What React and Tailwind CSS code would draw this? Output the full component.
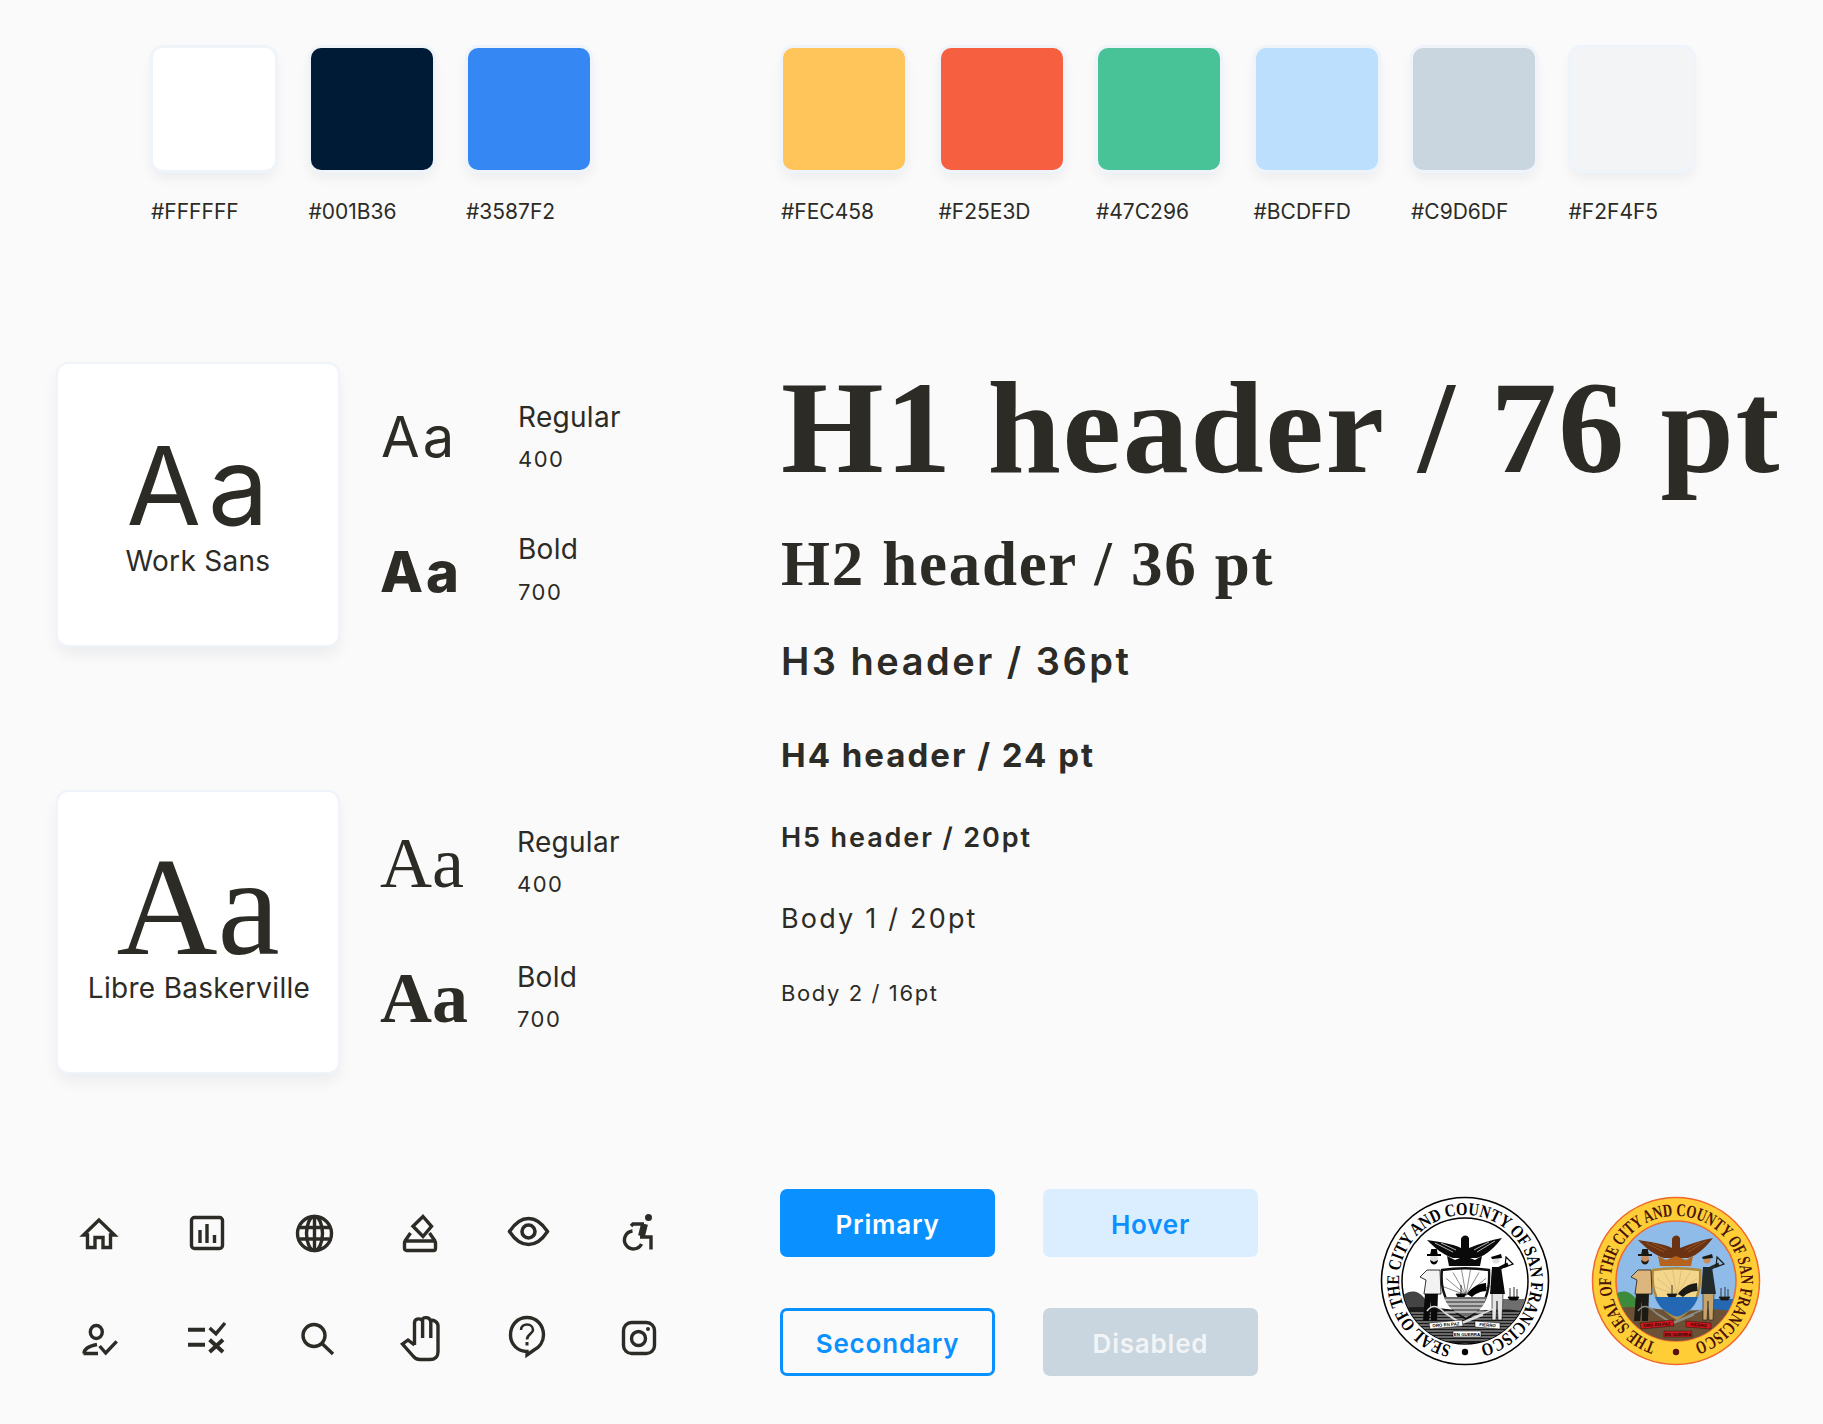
const sans = 'font-["Inter",sans-serif]';
const ink = '#2c2b26';

const swatchesLeft = [
  { color: '#FFFFFF', label: '#FFFFFF' },
  { color: '#001B36', label: '#001B36' },
  { color: '#3587F3', label: '#3587F2' },
];
const swatchesRight = [
  { color: '#FFC55B', label: '#FEC458' },
  { color: '#F66041', label: '#F25E3D' },
  { color: '#48C397', label: '#47C296' },
  { color: '#BCDFFD', label: '#BCDFFD' },
  { color: '#C9D6DF', label: '#C9D6DF' },
  { color: '#F2F4F5', label: '#F2F4F5' },
];

function Swatch({ color, label }) {
  return (
    <div className="flex w-[122px] flex-col">
      <div
        className="h-[122px] w-[122px] rounded-[10px] shadow-[0_0_0_3px_#eff4fa,0_7px_14px_rgba(0,27,54,0.07)]"
        style={{ backgroundColor: color }}
      />
      <div className={`${sans} -ml-[2px] mt-[28px] whitespace-nowrap text-[21px] leading-[28px] text-[#2c2b26]`}>{label}</div>
    </div>
  );
}

function Variant({ sample, aaClass, aaOffset, name, weight, gap, nameClass = '' }) {
  return (
    <div className="flex">
      <div className={`w-[135px] shrink-0 ${aaOffset} ${aaClass} text-[#2c2b26]`}>{sample}</div>
      <div className={`${sans} ${nameClass} text-[#2c2b26]`}>
        <div className="text-[28px] leading-[34px] tracking-[0.3px]">{name}</div>
        <div className={`${gap} text-[22px] leading-[28px] tracking-[1.5px]`}>{weight}</div>
      </div>
    </div>
  );
}

function WorkSansRow() {
  return (
    <div className="flex">
      <div className="h-[281px] w-[280px] shrink-0 rounded-[10px] bg-white pt-[68px] text-center text-[#2c2b26] shadow-[0_0_0_2px_#eff4fa,0_8px_16px_rgba(0,27,54,0.07)]">
        <div className={`${sans} ml-[6px] text-[108px] leading-[108px] tracking-[7px]`}>Aa</div>
        <div className={`${sans} mt-[4px] text-[28px] leading-[34px] tracking-[0.3px]`}>Work Sans</div>
      </div>
      <div className="ml-[45px] flex flex-col pt-[36px]">
        <Variant sample="Aa" aaClass={`${sans} text-[56px] leading-[60px] tracking-[3px]`} aaOffset="mt-[7px] -ml-[2px] mr-[2px]" name="Regular" weight="400" gap="mt-[11px]" />
        <div className="mt-[59px]">
          <Variant sample="Aa" aaClass={`${sans} text-[56px] leading-[60px] font-extrabold tracking-[3px]`} aaOffset="mt-[10px] -ml-[3px]" name="Bold" weight="700" gap="mt-[12px]" nameClass="ml-[3px]" />
        </div>
      </div>
    </div>
  );
}

function BaskervilleRow() {
  const serif = 'font-["Liberation_Serif",serif]';
  return (
    <div className="mt-[147px] flex">
      <div className="h-[280px] w-[280px] shrink-0 rounded-[10px] bg-white pt-[51px] text-center text-[#2c2b26] shadow-[0_0_0_2px_#eff4fa,0_8px_16px_rgba(0,27,54,0.07)]">
        <div className={`${serif} text-[140px] leading-[128px]`}>Aa</div>
        <div className={`${sans} ml-[2px] whitespace-nowrap text-[28px] leading-[34px] tracking-[0.3px]`}>Libre Baskerville</div>
      </div>
      <div className="ml-[42px] flex flex-col pt-[33px]">
        <Variant sample="Aa" aaClass={`${serif} text-[72px] leading-[72px]`} aaOffset="mt-[2px]" name="Regular" weight="400" gap="mt-[11px]" nameClass="ml-[2px]" />
        <div className="mt-[61px]">
          <Variant sample="Aa" aaClass={`${serif} text-[72px] leading-[72px] font-bold`} aaOffset="mt-[2px]" name="Bold" weight="700" gap="mt-[11px]" nameClass="ml-[2px]" />
        </div>
      </div>
    </div>
  );
}

function Headings() {
  const serif = 'font-["Liberation_Serif",serif] font-bold whitespace-nowrap';
  const work = `${sans} whitespace-nowrap`;
  return (
    <div className="flex flex-col text-[#2c2b26]">
      <div className={`${serif} mt-[4px] text-[132px] leading-[120px] tracking-[1.6px]`}>H1 header / 76 pt</div>
      <div className={`${serif} mt-[41px] text-[63px] leading-[70px] tracking-[1.7px]`}>H2 header / 36 pt</div>
      <div className={`${work} mt-[40px] text-[38px] leading-[44px] font-semibold tracking-[2.5px]`}>H3 header / 36pt</div>
      <div className={`${work} mt-[52px] text-[33px] leading-[40px] font-bold tracking-[2px]`}>H4 header / 24 pt</div>
      <div className={`${work} mt-[47px] text-[27px] leading-[32px] font-semibold tracking-[1.9px]`}>H5 header / 20pt</div>
      <div className={`${work} mt-[49px] text-[27px] leading-[32px] font-normal tracking-[2.2px]`}>Body 1 / 20pt</div>
      <div className={`${work} mt-[44px] text-[22px] leading-[28px] font-normal tracking-[1.6px]`}>Body 2 / 16pt</div>
    </div>
  );
}

// every icon sits in a 60x60 frame, dx/dy nudge the drawing inside it
function Icon({ dx, dy, children }) {
  return (
    <svg width="60" height="60" viewBox="0 0 60 60" fill="none" stroke={ink} strokeWidth="3.4" strokeLinejoin="miter">
      <g transform={`translate(${dx} ${dy})`}>{children}</g>
    </svg>
  );
}

const icons = [
  <Icon key="home" dx={12} dy={15}>
    <path d="M18 2 L2.5 17 H6.5 V29.5 H14 V19.5 H22 V29.5 H29.5 V17 H33.5 Z" />
  </Icon>,
  <Icon key="chart" dx={13} dy={13}>
    <rect x="1.5" y="1.5" width="31" height="31" rx="3" />
    <path d="M10 14 V27 M17 8 V27 M24.5 19 V27" />
  </Icon>,
  <Icon key="globe" dx={11} dy={12}>
    <circle cx="18.5" cy="18.5" r="17" />
    <ellipse cx="18.5" cy="18.5" rx="8" ry="17" />
    <path d="M18.5 1.5 V35.5 M3.5 12.5 H33.5 M3.5 24 H33.5" />
  </Icon>,
  <Icon key="ballot" dx={10} dy={11}>
    <path d="M20 2.5 L28.5 12.3 L20 22.5 L10 12.3 Z" />
    <path d="M7.5 19 L2 27 M26.5 19 L32 27" />
    <rect x="1.5" y="27" width="31" height="9.5" rx="2" />
  </Icon>,
  <Icon key="eye" dx={7} dy={14}>
    <path d="M1.5 14.5 C8 4.5 14 1.5 20.5 1.5 S33 4.5 39.5 14.5 C33 24.5 27 27.5 20.5 27.5 S8 24.5 1.5 14.5 Z" />
    <circle cx="20.5" cy="14.5" r="6.5" strokeWidth="3.6" />
  </Icon>,
  <Icon key="wheel" dx={15} dy={11}>
    <circle cx="24.5" cy="3.5" r="3.5" fill={ink} stroke="none" />
    <path d="M7 12 L9 10 H20" />
    <path d="M20.5 10 L17.5 22" strokeWidth="7" />
    <path d="M16 23 H27 V35.5" />
    <path d="M8.5 17 A 9 9 0 1 0 17.5 30" />
  </Icon>,
  <Icon key="person" dx={13} dy={16}>
    <ellipse cx="14.3" cy="8" rx="6" ry="6.5" />
    <path d="M2 29.5 C2 25 7 22 15 20.5 M1.5 29.5 H16" />
    <path d="M17.6 22 L23.7 29 L34.7 17.3" />
  </Icon>,
  <Icon key="list" dx={11} dy={15} >
    <path d="M0 6.7 H17 M0 21.7 H17" strokeWidth="4" />
    <path d="M21.6 5 L28 10.7 L37 0" />
    <path d="M21.6 16.7 L35 29 M35 16.7 L21.6 29" strokeWidth="4" />
  </Icon>,
  <Icon key="search" dx={16} dy={15}>
    <circle cx="13" cy="12.5" r="11" />
    <path d="M21 20.5 L32 31" />
  </Icon>,
  <Icon key="hand" dx={8} dy={8}>
    <path d="M13.5 29 V7 C13.5 2.5 18 2 21 4 C22.5 0.5 28 1 29.5 4.5 C32 3.5 37 5.5 37 10 V36 C37 40.5 34 43.5 29 43.5 H19 C15.5 43.5 13.5 42 12 40 L1.5 28 L7 24 L13.5 29" />
    <path d="M21.6 4 V22 M29.8 4.5 V22" />
  </Icon>,
  <Icon key="question" dx={8} dy={8}>
    <path d="M18 1.5 C27.5 1.5 34.5 9 34.5 19 C34.5 26 30 31.5 25 34 L18 39 V35.5 C8.5 35.5 1.5 28 1.5 19 C1.5 9 8.5 1.5 18 1.5 Z" />
    <path d="M12 14 C12 10 15 8.5 18 8.5 C21.5 8.5 24 11 24 14 C24 17.5 18 18.5 18 23.5" strokeWidth="2.6" />
    <path d="M18 26 V29.5" strokeWidth="3" />
  </Icon>,
  <Icon key="insta" dx={13} dy={13}>
    <rect x="1.5" y="1.5" width="31" height="31" rx="8" />
    <circle cx="16.5" cy="17.5" r="7" />
    <circle cx="26" cy="8" r="2" fill={ink} stroke="none" />
  </Icon>,
];

const colorSeal = {
  id: 'color', text: 'THE SEAL OF THE CITY AND COUNTY OF SAN FRANCISCO', start: 18, end: 17,
  ring: '#ffce37', border: '#f0682c', textColor: '#4a1408', inner: 60, base: 65, fontSize: 18, borderWidth: 1.5,
  sky: '#8fbbe8', skyStroke: '#f0682c', eagle: '#6b3312', crown: '#b5641f', frame: '#b08a3c', shieldTop: '#f3d68c',
  sea: '#2468b4', hill: '#3c8a3a', ground: '#6b5236', shirt: '#dcb67c', pants: '#1c1a14', coat: '#232a2c', pants2: '#c8a468',
  skin: '#c98d5e', ribbon: '#d0181c', ribbonText: '#2a0606', plow: '#8c8c84', dark: '#1c1a14', dot: '#5a1008', line: '#c9a860',
  feather: '#a8622a', hatch: null,
};
const blackSeal = {
  id: 'mono', text: 'SEAL OF THE CITY AND COUNTY OF SAN FRANCISCO', start: 12, end: 14,
  ring: '#ffffff', border: '#000000', textColor: '#000000', inner: 63, base: 66, fontSize: 18, borderWidth: 1.6,
  sky: '#ffffff', skyStroke: '#000000', eagle: '#0a0a0a', crown: '#0a0a0a', frame: '#111111', shieldTop: '#ffffff',
  sea: '#6e6e6e', hill: '#444444', ground: '#1a1a1a', shirt: '#f2f2f2', pants: '#0a0a0a', coat: '#0a0a0a', pants2: '#e4e4e4',
  skin: '#dddddd', ribbon: '#ffffff', ribbonText: '#000000', plow: '#dddddd', dark: '#000000', dot: '#000000', line: '#111111',
  feather: '#ffffff', hatch: '#ffffff',
};

function polar(r, deg) {
  const a = (deg * Math.PI) / 180;
  return [-r * Math.sin(a), r * Math.cos(a)];
}

function Seal({ p }) {
  const [sx, sy] = polar(p.base, p.start);
  const [ex, ey] = polar(p.base, 360 - p.end);
  const arcLength = (2 * Math.PI * p.base * (360 - p.start - p.end)) / 360;
  const rays = [-70, -50, -30, -10, 10, 30, 50, 70];
  const hatchRows = [32, 35, 38, 41, 44, 47, 50, 53, 56, 59];
  return (
    <svg width="170" height="170" viewBox="-85 -85 170 170" className="shrink-0">
      <defs>
        <path id={`arc-${p.id}`} d={`M${sx} ${sy} A${p.base} ${p.base} 0 1 1 ${ex} ${ey}`} />
        <clipPath id={`disc-${p.id}`}><circle r={p.inner} /></clipPath>
      </defs>
      <circle r="83.5" fill={p.ring} stroke={p.border} strokeWidth={p.borderWidth} />
      <circle r={p.inner} fill={p.sky} stroke={p.skyStroke} strokeWidth="1.5" />
      <text fill={p.textColor} fontFamily="'Liberation Serif', serif" fontWeight="700" fontSize={p.fontSize}>
        <textPath href={`#arc-${p.id}`} textLength={arcLength} lengthAdjust="spacingAndGlyphs">{p.text}</textPath>
      </text>
      <circle cx="0" cy="71" r="3.2" fill={p.dot} />
      <g clipPath={`url(#disc-${p.id})`}>
        <path d="M-62 30 V14 C-53 8 -46 10 -40 18 V32 Z" fill={p.hill} />
        <rect x="38" y="18" width="24" height="16" fill={p.sea} />
        <path d="M43 16 H54 L52 19 H45 Z M45 16 V7 M49 16 V6 M52 16 V8" fill={p.dark} stroke={p.dark} strokeWidth="0.8" />
        <path d="M-62 27 C-40 24 -20 28 0 30 C20 30 40 26 62 31 V62 H-62 Z" fill={p.ground} />
        {p.hatch && hatchRows.map((y) => (
          <line key={y} x1="-62" y1={y} x2="62" y2={y} stroke={p.hatch} strokeWidth="0.7" />
        ))}

        <path d="M-38 -41 C-25 -39 -12 -37 -4 -33 L-4 -42 C-3 -46 2 -47 4 -43 L4 -33 C14 -37 26 -41 37 -43 C30 -34 22 -26 12 -23 H-12 C-22 -26 -30 -33 -38 -41 Z" fill={p.eagle} />
        <path d="M-30 -38 L-12 -29 M-24 -38 L-9 -31 M30 -40 L12 -29 M24 -39 L9 -31" stroke={p.feather} strokeWidth="0.7" fill="none" />
        <path d="M-18 -25 L-10 -21 L0 -25 L10 -21 L17 -25 L15 -15 H-16 Z" fill={p.crown} />

        <path d="M-23 -11 C-10 -13 10 -13 24 -11 C25 8 22 26 1 38 C-20 26 -25 8 -23 -11 Z" fill={p.shieldTop} stroke={p.frame} strokeWidth="2.4" />
        <g stroke={p.line} strokeWidth="0.8" opacity="0.6">
          {rays.map((r) => {
            const [x, y] = polar(26, 180 + r);
            return <line key={r} x1="1" y1="14" x2={1 + x} y2={14 + y} />;
          })}
        </g>
        <path d="M2 13 C6 7 12 3 21 2 L21.5 10 C16 10 10 13 7 16 Z" fill={p.dark} />
        <path d="M-9 13 H1 L-1 16 H-7 Z M-4 13 V4" fill={p.dark} stroke={p.dark} strokeWidth="0.8" />
        <path d="M-21 16 H22 C19 26 12 32 1 36 C-10 32 -18 26 -21 16 Z" fill={p.sea} />
        {p.hatch && [19, 23, 27, 31].map((y) => (
          <line key={y} x1="-20" y1={y} x2="20" y2={y} stroke={p.hatch} strokeWidth="1" />
        ))}

        <path d="M-40 12 H-27 L-28 40 H-34 L-34 20 L-36 40 H-42 Z" fill={p.pants} />
        <path d="M-45 -4 L-38 -11 H-25 L-24 13 H-41 L-39 -1 Z" fill={p.shirt} stroke={p.dark} strokeWidth="0.8" />
        <circle cx="-31" cy="-22" r="4" fill={p.skin} />
        <path d="M-35 -21 C-34 -15 -28 -15 -27 -21 L-31 -19 Z" fill={p.dark} />
        <path d="M-38 -26 H-24 M-34 -26 L-33 -31 H-29 L-28 -26" fill={p.dark} stroke={p.dark} strokeWidth="1.8" />

        <path d="M27 12 H38 L37 39 H33 L32 20 L31 39 H27 Z" fill={p.pants2} stroke={p.dark} strokeWidth="0.6" />
        <path d="M27 -14 H36 L40 13 H25 Z" fill={p.coat} />
        <path d="M33 -12 L43 -17" stroke={p.coat} strokeWidth="3.5" />
        <circle cx="31" cy="-21" r="3.6" fill={p.skin} />
        <path d="M26 -24 L36 -27 L37 -23 L27 -22 Z" fill={p.dark} />
        <path d="M41 -24 L48 -17 L40 -14 Z" fill="none" stroke={p.dark} strokeWidth="1.2" />

        <path d="M-38 30 C-32 22 -26 26 -20 32 L-4 42 L28 28 M-20 32 L-8 40 M18 34 L-2 42" fill="none" stroke={p.plow} strokeWidth="1.6" />

        <g fontFamily="'Liberation Sans', sans-serif" fontWeight="700" fontSize="4.4" fill={p.ribbonText} textAnchor="middle">
          <path d="M-36 42 L-3 39 L-2 45 L-35 48 Z" fill={p.ribbon} stroke={p.dark} strokeWidth="0.5" />
          <text x="-19" y="45.2" transform="rotate(-4 -19 45)">ORO EN PAZ</text>
          <path d="M10 40 L35 42 L35 48 L10 46 Z" fill={p.ribbon} stroke={p.dark} strokeWidth="0.5" />
          <text x="22.5" y="45.6" transform="rotate(4 22 45)">FIERRO</text>
          <path d="M-12 50 H16 V56 H-12 Z" fill={p.ribbon} stroke={p.dark} strokeWidth="0.5" />
          <text x="2" y="54.6">EN GUERRA</text>
        </g>
      </g>
    </svg>
  );
}

function Button({ label, className }) {
  return (
    <button className={`${sans} h-[68px] w-[215px] rounded-[7px] pt-[3px] text-[26px] font-semibold tracking-[0.8px] ${className}`}>
      {label}
    </button>
  );
}

export default function App() {
  return (
    <div className="h-[1424px] w-[1823px] overflow-hidden bg-[#fafafa]">
      {/* colour palette */}
      <div className="flex h-[364px] pt-[48px]">
        <div className="ml-[153px] flex gap-[35.5px]">
          {swatchesLeft.map((s) => <Swatch key={s.label} {...s} />)}
        </div>
        <div className="ml-[193px] flex gap-[35.5px]">
          {swatchesRight.map((s) => <Swatch key={s.label} {...s} />)}
        </div>
      </div>

      {/* type samples */}
      <div className="flex h-[825px]">
        <div className="w-[781px] shrink-0 pl-[58px]">
          <WorkSansRow />
          <BaskervilleRow />
        </div>
        <Headings />
      </div>

      {/* icons, buttons, seals */}
      <div className="flex items-start pl-[69px]">
        <div className="mt-[14px] grid grid-cols-[repeat(6,60px)] gap-x-[48px] gap-y-[45px]">
          {icons}
        </div>
        <div className="ml-[111px] grid grid-cols-[215px_215px] gap-x-[48px] gap-y-[51px]">
          <Button label="Primary" className="bg-[#0a91ff] text-white" />
          <Button label="Hover" className="bg-[#dbeeff] text-[#0a91ff]" />
          <Button label="Secondary" className="border-[3px] border-[#0a91ff] text-[#0a91ff]" />
          <Button label="Disabled" className="bg-[#c9d6df] text-[#f2f4f5]" />
        </div>
        <div className="ml-[122px] mt-[7px] flex gap-[41px]">
          <Seal p={blackSeal} />
          <Seal p={colorSeal} />
        </div>
      </div>
    </div>
  );
}
